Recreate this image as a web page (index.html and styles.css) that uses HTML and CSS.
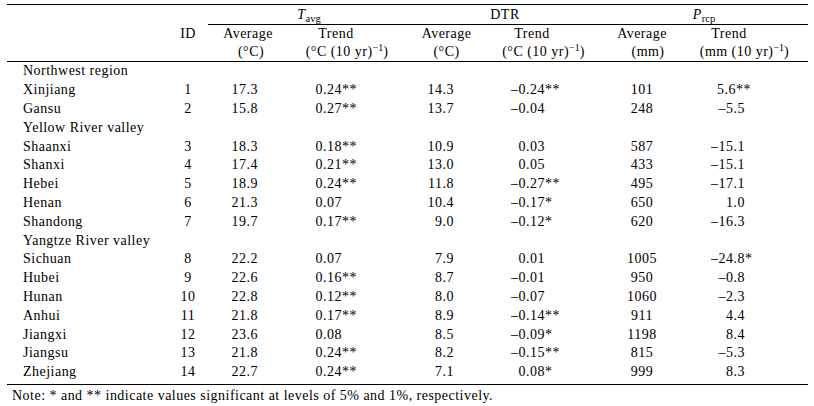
FILE: index.html
```html
<!DOCTYPE html>
<html>
<head>
<meta charset="utf-8">
<link rel="stylesheet" href="styles.css">
</head>
<body>
<div class="tbl">
  <div class="head">
    <div class="grp g1"><i>T</i><span class="sub">avg</span></div>
    <div class="grp g2">DTR</div>
    <div class="grp g3"><i>P</i><span class="sub">rcp</span></div>

    <div class="h2 c2">ID</div>
    <div class="h2 c3">Average</div>
    <div class="h2 c4 trend4">Trend</div>
    <div class="h2 c5">Average</div>
    <div class="h2 c6 trend6">Trend</div>
    <div class="h2 c7">Average</div>
    <div class="h2 c8 trend8">Trend</div>

    <div class="h3 c3 u3">(°C)</div>
    <div class="h3 c4 u4">(°C (10 yr)<span class="sup">−1</span>)</div>
    <div class="h3 c5">(°C)</div>
    <div class="h3 c6 u6">(°C (10 yr)<span class="sup">−1</span>)</div>
    <div class="h3 c7 u7">(mm)</div>
    <div class="h3 c8 u8">(mm (10 yr)<span class="sup">−1</span>)</div>
  </div>

  <div class="body">
    <div class="region">Northwest region</div>
    <div class="name">Xinjiang</div><div class="id">1</div><div class="ta">17.3</div><div class="tt"><span class="n">0.24</span>**</div><div class="da">14.3</div><div class="dt"><span class="n">–0.24</span>**</div><div class="pa">101</div><div class="pt"><span class="n short">5.6</span>**</div>
    <div class="name">Gansu</div><div class="id">2</div><div class="ta">15.8</div><div class="tt"><span class="n">0.27</span>**</div><div class="da">13.7</div><div class="dt"><span class="n">–0.04</span></div><div class="pa">248</div><div class="pt"><span class="n">–5.5</span></div>

    <div class="region">Yellow River valley</div>
    <div class="name">Shaanxi</div><div class="id">3</div><div class="ta">18.3</div><div class="tt"><span class="n">0.18</span>**</div><div class="da">10.9</div><div class="dt"><span class="n">0.03</span></div><div class="pa">587</div><div class="pt"><span class="n">–15.1</span></div>
    <div class="name">Shanxi</div><div class="id">4</div><div class="ta">17.4</div><div class="tt"><span class="n">0.21</span>**</div><div class="da">13.0</div><div class="dt"><span class="n">0.05</span></div><div class="pa">433</div><div class="pt"><span class="n">–15.1</span></div>
    <div class="name">Hebei</div><div class="id">5</div><div class="ta">18.9</div><div class="tt"><span class="n">0.24</span>**</div><div class="da">11.8</div><div class="dt"><span class="n">–0.27</span>**</div><div class="pa">495</div><div class="pt"><span class="n">–17.1</span></div>
    <div class="name">Henan</div><div class="id">6</div><div class="ta">21.3</div><div class="tt"><span class="n">0.07</span></div><div class="da">10.4</div><div class="dt"><span class="n">–0.17</span>*</div><div class="pa">650</div><div class="pt"><span class="n">1.0</span></div>
    <div class="name">Shandong</div><div class="id">7</div><div class="ta">19.7</div><div class="tt"><span class="n">0.17</span>**</div><div class="da">9.0</div><div class="dt"><span class="n">–0.12</span>*</div><div class="pa">620</div><div class="pt"><span class="n">–16.3</span></div>

    <div class="region">Yangtze River valley</div>
    <div class="name">Sichuan</div><div class="id">8</div><div class="ta">22.2</div><div class="tt"><span class="n">0.07</span></div><div class="da">7.9</div><div class="dt"><span class="n">0.01</span></div><div class="pa">1005</div><div class="pt"><span class="n">–24.8</span>*</div>
    <div class="name">Hubei</div><div class="id">9</div><div class="ta">22.6</div><div class="tt"><span class="n">0.16</span>**</div><div class="da">8.7</div><div class="dt"><span class="n">–0.01</span></div><div class="pa">950</div><div class="pt"><span class="n">–0.8</span></div>
    <div class="name">Hunan</div><div class="id">10</div><div class="ta">22.8</div><div class="tt"><span class="n">0.12</span>**</div><div class="da">8.0</div><div class="dt"><span class="n">–0.07</span></div><div class="pa">1060</div><div class="pt"><span class="n">–2.3</span></div>
    <div class="name">Anhui</div><div class="id">11</div><div class="ta">21.8</div><div class="tt"><span class="n">0.17</span>**</div><div class="da">8.9</div><div class="dt"><span class="n">–0.14</span>**</div><div class="pa">911</div><div class="pt"><span class="n">4.4</span></div>
    <div class="name">Jiangxi</div><div class="id">12</div><div class="ta">23.6</div><div class="tt"><span class="n">0.08</span></div><div class="da">8.5</div><div class="dt"><span class="n">–0.09</span>*</div><div class="pa">1198</div><div class="pt"><span class="n">8.4</span></div>
    <div class="name">Jiangsu</div><div class="id">13</div><div class="ta">21.8</div><div class="tt"><span class="n">0.24</span>**</div><div class="da">8.2</div><div class="dt"><span class="n">–0.15</span>**</div><div class="pa">815</div><div class="pt"><span class="n">–5.3</span></div>
    <div class="name">Zhejiang</div><div class="id">14</div><div class="ta">22.7</div><div class="tt"><span class="n">0.24</span>**</div><div class="da">7.1</div><div class="dt"><span class="n">0.08</span>*</div><div class="pa">999</div><div class="pt"><span class="n">8.3</span></div>
  </div>
</div>
<p class="note">Note: * and ** indicate values significant at levels of 5% and 1%, respectively.</p>
</body>
</html>
```

FILE: styles.css
```css
html, body {
  margin: 0;
  padding: 0;
  background: #fff;
}
body {
  font-family: "Liberation Serif", "Times New Roman", serif;
  font-size: 14px;
  letter-spacing: 0.48px;
  color: #000;
  width: 814px;
  height: 406px;
  overflow: hidden;
}
.tbl {
  margin: 4px 0 0 7px;
  width: 801px;
  border-top: 1px solid #000;
  border-bottom: 1px solid #000;
}
.head, .body {
  display: grid;
  grid-template-columns: 161px 40px 80px 122px 73px 117px 84px 124px;
}
.head {
  grid-template-rows: 20px 17px 19px;
  border-bottom: 1px solid #000;
}
.grp {
  grid-row: 1;
  border-bottom: 1px solid #000;
  text-align: center;
  line-height: 19px;
}
.g1 { grid-column: 3 / 5; }
.g2 { grid-column: 5 / 7; }
.g3 { grid-column: 7 / 9; }
.h2, .h3 {
  text-align: center;
  white-space: nowrap;
}
.h2 { grid-row: 2; line-height: 17px; }
.h3 { grid-row: 3; line-height: 19px; }
.c2 { grid-column: 2; }
.c3 { grid-column: 3; }
.c4 { grid-column: 4; }
.c5 { grid-column: 5; }
.c6 { grid-column: 6; }
.c7 { grid-column: 7; }
.c8 { grid-column: 8; }
.trend4 { padding-right: 26px; }
.u4 { padding-right: 4px; }
.trend6 { padding-right: 19px; }
.u6 { padding-left: 4px; }
.u7 { padding-left: 12px; }
.trend8 { padding-right: 34px; }
.u8 { padding-right: 3px; }
.u3 { padding-left: 6px; }
.sub {
  font-size: 10.5px;
  letter-spacing: 0;
  vertical-align: -3px;
  line-height: 0;
}
.sup {
  font-size: 10px;
  letter-spacing: 0;
  vertical-align: 5px;
  line-height: 0;
}
.body {
  grid-auto-rows: 18.8px;
  line-height: 18.8px;
  padding: 0.4px 0 2px 0;
  white-space: nowrap;
}
.region {
  grid-column: 1 / -1;
  padding-left: 16px;
}
.name { padding-left: 16px; }
.id { text-align: center; }
.ta { text-align: right; padding-right: 30px; }
.da { text-align: right; padding-right: 29px; }
.pa { text-align: center; }
.tt { padding-left: 14px; }
.dt { padding-left: 22px; }
.pt { padding-left: 21px; }
.n {
  display: inline-block;
  width: 40px;
  text-align: right;
}
.n.short { width: 31px; }
.note {
  margin: 3px 0 0 12px;
  line-height: 16px;
}
```
